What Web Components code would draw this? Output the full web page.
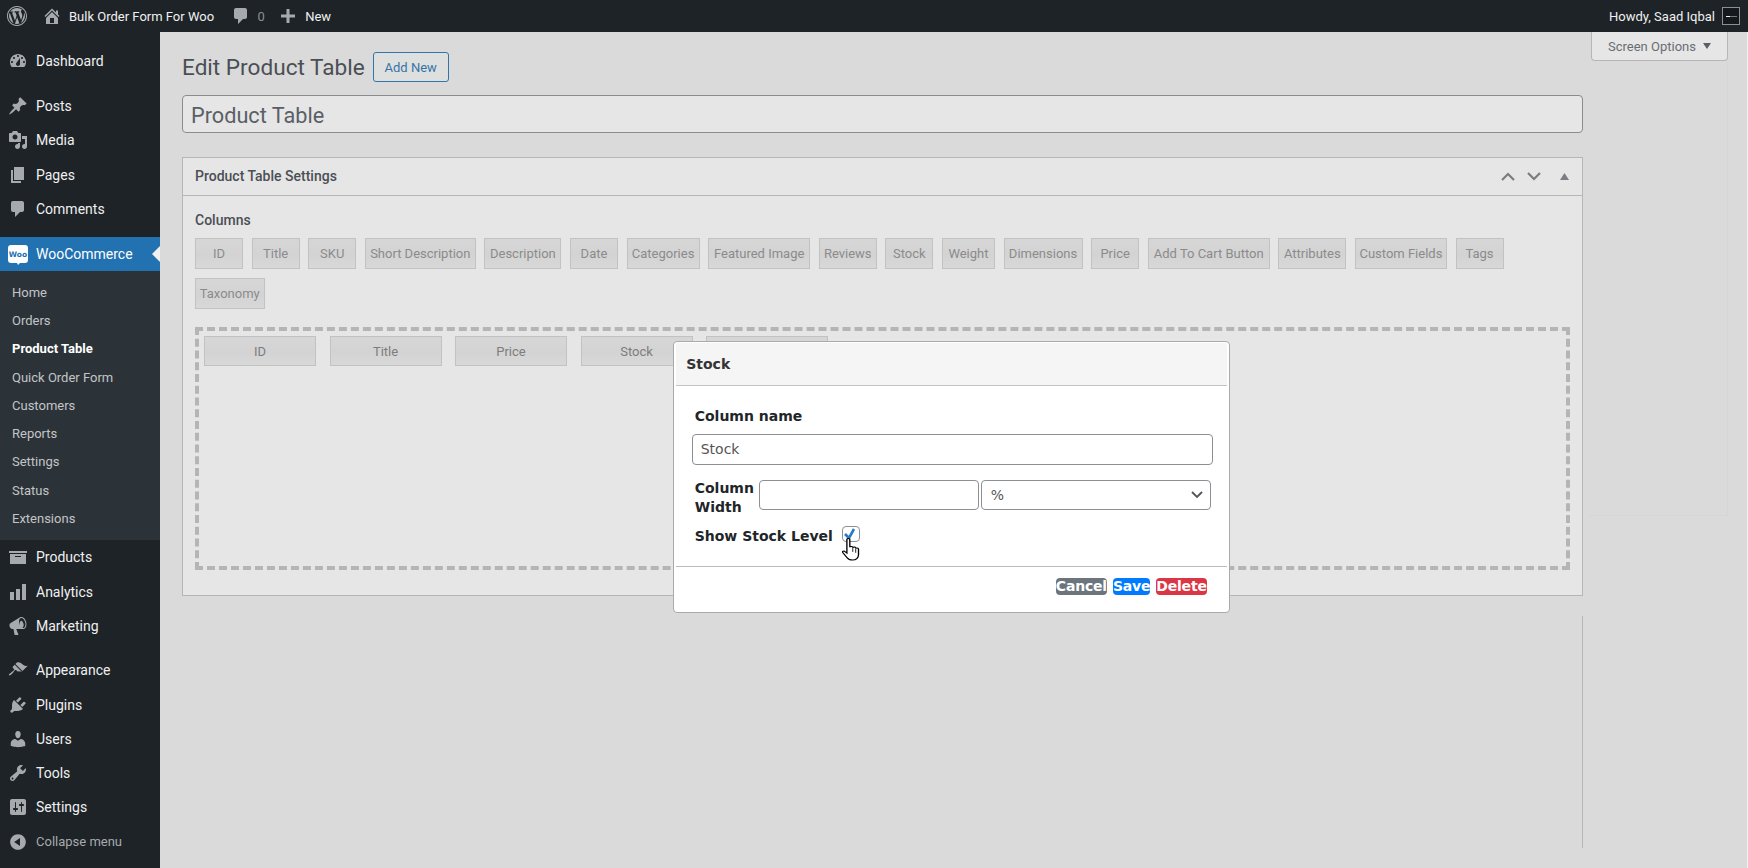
<!DOCTYPE html>
<html lang="en">
<head>
<meta charset="utf-8">
<title>Edit Product Table</title>
<style>
  html, body { margin: 0; height: 868px; overflow: hidden; background: #f0f0f1; }
  body { font-family: Roboto, "Liberation Sans", sans-serif; font-size: 13px; color: #1d2327; }
</style>
</head>
<body>
<wp-app>
  <wp-admin-bar slot="bar"></wp-admin-bar>
  <wp-side-menu slot="menu">
    <wp-menu-item icon="dashboard">Dashboard</wp-menu-item>
    <wp-menu-item icon="post" sep="10.7">Posts</wp-menu-item>
    <wp-menu-item icon="media">Media</wp-menu-item>
    <wp-menu-item icon="page">Pages</wp-menu-item>
    <wp-menu-item icon="comment">Comments</wp-menu-item>
    <wp-menu-item icon="woo" sep="11" current>WooCommerce</wp-menu-item>
    <wp-sub-menu>
      <wp-sub-item>Home</wp-sub-item>
      <wp-sub-item>Orders</wp-sub-item>
      <wp-sub-item current>Product Table</wp-sub-item>
      <wp-sub-item>Quick Order Form</wp-sub-item>
      <wp-sub-item>Customers</wp-sub-item>
      <wp-sub-item>Reports</wp-sub-item>
      <wp-sub-item>Settings</wp-sub-item>
      <wp-sub-item>Status</wp-sub-item>
      <wp-sub-item>Extensions</wp-sub-item>
    </wp-sub-menu>
    <wp-menu-item icon="archive">Products</wp-menu-item>
    <wp-menu-item icon="chart">Analytics</wp-menu-item>
    <wp-menu-item icon="megaphone">Marketing</wp-menu-item>
    <wp-menu-item icon="appearance" sep="10">Appearance</wp-menu-item>
    <wp-menu-item icon="plugin">Plugins</wp-menu-item>
    <wp-menu-item icon="users">Users</wp-menu-item>
    <wp-menu-item icon="tools">Tools</wp-menu-item>
    <wp-menu-item icon="settings">Settings</wp-menu-item>
    <wp-menu-item icon="collapse" dim>Collapse menu</wp-menu-item>
  </wp-side-menu>
  <table-editor slot="main">
    <meta-box heading="Product Table Settings">
      <column-picker>
        <col-chip style="--w:48px">ID</col-chip>
        <col-chip style="--w:48px">Title</col-chip>
        <col-chip style="--w:48px">SKU</col-chip>
        <col-chip style="--w:111px">Short Description</col-chip>
        <col-chip style="--w:77px">Description</col-chip>
        <col-chip style="--w:48px">Date</col-chip>
        <col-chip style="--w:73px">Categories</col-chip>
        <col-chip style="--w:102px">Featured Image</col-chip>
        <col-chip style="--w:58px">Reviews</col-chip>
        <col-chip style="--w:48px">Stock</col-chip>
        <col-chip style="--w:53px">Weight</col-chip>
        <col-chip style="--w:79px">Dimensions</col-chip>
        <col-chip style="--w:48px">Price</col-chip>
        <col-chip style="--w:122px">Add To Cart Button</col-chip>
        <col-chip style="--w:68px">Attributes</col-chip>
        <col-chip style="--w:92px">Custom Fields</col-chip>
        <col-chip style="--w:48px">Tags</col-chip>
        <col-chip style="--w:69.5px">Taxonomy</col-chip>
      </column-picker>
      <drop-zone>
        <col-chip picked style="--w:112px">ID</col-chip>
        <col-chip picked style="--w:112px">Title</col-chip>
        <col-chip picked style="--w:112px">Price</col-chip>
        <col-chip picked style="--w:112px">Stock</col-chip>
        <col-chip picked style="--w:122px"></col-chip>
      </drop-zone>
    </meta-box>
  </table-editor>
  <column-modal slot="main" heading="Stock"></column-modal>
</wp-app>

<script>
const ICONS = {
  wp: 'M20 10c0-5.52-4.48-10-10-10S0 4.48 0 10s4.48 10 10 10 10-4.48 10-10zM10 1.01c4.96 0 8.99 4.03 8.99 8.99s-4.03 8.99-8.99 8.99S1.01 14.96 1.01 10 5.04 1.01 10 1.01zM8.01 14.82L4.96 6.61c.49-.03 1.05-.08 1.05-.08.43-.05.38-1.01-.06-.99 0 0-1.29.1-2.13.1-.15 0-.33 0-.52-.01 1.44-2.17 3.9-3.6 6.7-3.6 2.09 0 3.99.79 5.41 2.09-.6-.08-1.45.35-1.45 1.42 0 .66.38 1.22.79 1.88.31.54.5 1.22.5 2.21 0 1.34-1.27 4.48-1.27 4.48l-2.71-7.5c.48-.03.75-.16.75-.16.43-.05.38-1.1-.05-1.08 0 0-1.3.11-2.14.11-.78 0-2.11-.11-2.11-.11-.43-.02-.48 1.06-.05 1.08l.84.08 1.12 3.04zm6.02 2.15L16.64 10s.67-1.69.39-3.81c.63 1.14.94 2.42.94 3.81 0 2.96-1.56 5.58-3.94 7.01zM2.68 6.77L6.5 17.25c-2.67-1.3-4.47-4.08-4.47-7.25 0-1.16.2-2.23.65-3.23zm7.45 4.53l2.29 6.25c-.75.27-1.57.42-2.42.42-.72 0-1.41-.11-2.06-.3z',
  home: 'M16 8.5l1.53 1.53-1.06 1.06L10 4.62l-6.47 6.47-1.06-1.06L10 2.5l4 4v-2h2v4zm-6-2.46l6 5.99V18H4v-5.97zM12 17v-5H8v5h4z',
  plus: 'M8.5 3h3v5.5H17v3h-5.5V17h-3v-5.5H3v-3h5.5z',
  dashboard: 'M3.76 16h12.48c1.1-1.37 1.76-3.11 1.76-5 0-4.42-3.58-8-8-8s-8 3.58-8 8c0 1.89.66 3.63 1.76 5zM10 4c.55 0 1 .45 1 1s-.45 1-1 1-1-.45-1-1 .45-1 1-1zM6 6c.55 0 1 .45 1 1s-.45 1-1 1-1-.45-1-1 .45-1 1-1zm8 0c.55 0 1 .45 1 1s-.45 1-1 1-1-.45-1-1 .45-1 1-1zm-5.37 5.55L12 7v6c0 1.1-.9 2-2 2s-2-.9-2-2c0-.57.24-1.08.63-1.45zM4 10c.55 0 1 .45 1 1s-.45 1-1 1-1-.45-1-1 .45-1 1-1zm12 0c.55 0 1 .45 1 1s-.45 1-1 1-1-.45-1-1 .45-1 1-1z',
  post: 'M10.44 3.02l1.82-1.82 6.36 6.35-1.83 1.82c-1.05-.68-2.48-.57-3.41.36l-.75.75c-.92.93-1.04 2.35-.35 3.41l-1.83 1.82-2.41-2.41-2.8 2.79c-.42.42-3.38 2.71-3.8 2.29s1.86-3.39 2.28-3.81l2.79-2.79L4.1 9.36l1.83-1.82c1.05.69 2.48.57 3.4-.36l.75-.75c.93-.92 1.05-2.35.36-3.41z',
  media: 'M13 11V4c0-.55-.45-1-1-1h-1.67L9 1H5L3.67 3H2c-.55 0-1 .45-1 1v7c0 .55.45 1 1 1h10c.55 0 1-.45 1-1zM7 4.5c1.38 0 2.5 1.12 2.5 2.5S8.38 9.5 7 9.5 4.5 8.38 4.5 7 5.62 4.5 7 4.5zM14 6h5v10.5c0 1.38-1.12 2.5-2.5 2.5S14 17.88 14 16.5s1.12-2.5 2.5-2.5c.17 0 .34.02.5.05V9h-3V6zm-4 8.05V13h2v3.5c0 1.38-1.12 2.5-2.5 2.5S7 17.88 7 16.5 8.12 14 9.5 14c.17 0 .34.02.5.05z',
  page: 'M6 15V2h10v13H6zm-1 1h8v2H3V5h2v11z',
  comment: 'M5 2h9c1.1 0 2 .9 2 2v7c0 1.1-.9 2-2 2h-2l-5 5v-5H5c-1.1 0-2-.9-2-2V4c0-1.1.9-2 2-2z',
  archive: 'M19 4v2H1V4h18zM2 7h16v10H2V7zm11 3V9H7v1h6z',
  chart: 'M18 18V2h-4v16h4zm-6 0V7H8v11h4zm-6 0v-8H2v8h4z',
  megaphone: 'M18.15 5.94c.46 1.62.38 3.22-.02 4.48-.42 1.28-1.26 2.18-2.3 2.48-.16.06-.26.06-.4.06-.06.02-.12.02-.18.02-.06.02-.14.02-.22.02h-6.8l2.22 5.5c.02.14-.06.26-.14.34-.08.1-.24.16-.34.16H6.95c-.1 0-.26-.06-.34-.16-.08-.08-.16-.2-.14-.34l-1-5.5H4.25l-.02-.02c-.5.06-1.08-.18-1.54-.62s-.88-1.08-1.06-1.88c-.24-.8-.2-1.56-.02-2.2.18-.62.58-1.08 1.06-1.3l.02-.02 9-5.4c.1-.06.18-.1.24-.16.06-.04.14-.08.24-.12.16-.08.28-.12.5-.18 1.04-.3 2.24.1 3.22.98s1.84 2.24 2.26 3.86zm-2.58 5.98h-.02c.4-.1.74-.34 1.04-.7.58-.7.86-1.76.86-3.04 0-.64-.1-1.3-.28-1.98-.34-1.36-1.02-2.5-1.78-3.24s-1.68-1.1-2.46-.88c-.82.22-1.4.96-1.7 2-.32 1.04-.28 2.36.06 3.72.38 1.36 1 2.5 1.8 3.24.78.74 1.62 1.1 2.48.88zm-2.54-7.08c.22-.04.42-.02.62.04.38.16.76.48 1.1 1s.58 1.2.78 1.9c.16.72.2 1.4.12 2.02-.1.6-.34 1.14-.7 1.48-.18.16-.38.3-.62.36-.22.04-.42.02-.62-.04-.4-.16-.76-.48-1.1-1-.34-.54-.58-1.2-.78-1.9-.16-.72-.2-1.4-.12-2.02.1-.6.34-1.14.7-1.48.18-.16.38-.3.62-.36z',
  appearance: 'M14.48 11.06L7.41 3.99l1.5-1.5c.5-.56 2.3-.47 3.51.32 1.21.8 1.43 1.28 2.91 2.1 1.18.64 2.45 1.26 4.45.85zm-.71.71L6.7 4.7 4.93 6.47c-.39.39-.39 1.02 0 1.41l1.06 1.06c.39.39.39 1.03 0 1.42-.6.6-1.43 1.11-2.21 1.69-.35.26-.7.53-1.01.84C1.43 13.23.4 14.85.9 15.35l.01.01c.5.5 2.12-.53 3.46-1.87.31-.31.58-.66.84-1.01.58-.78 1.09-1.61 1.69-2.21.39-.39 1.02-.39 1.41 0l1.06 1.06c.39.39 1.02.39 1.41 0z',
  plugin: 'M13.11 4.36L9.87 7.6 8 5.73l3.24-3.24c.35-.34 1.05-.2 1.56.32.52.51.66 1.21.31 1.55zm-8 1.77l.91-1.12 9.01 9.01-1.19.84c-.71.71-2.63 1.16-3.82 1.16H6.14L4.9 17.26c-.59.59-1.54.59-2.12 0-.59-.58-.59-1.53 0-2.12l1.24-1.24v-3.88c0-1.13.4-3.19 1.09-3.89zm7.26 3.97l3.24-3.24c.34-.35 1.04-.21 1.55.31.52.51.66 1.21.31 1.55l-3.24 3.25z',
  users: 'M10 9.25c-2.27 0-2.73-3.44-2.73-3.44C7 4.02 7.82 2 9.97 2c2.16 0 2.98 2.02 2.71 3.81 0 0-.41 3.44-2.68 3.44zm0 2.57L12.72 10c2.39 0 4.52 2.33 4.52 4.53v2.49s-3.65 1.13-7.24 1.13c-3.65 0-7.24-1.13-7.24-1.13v-2.49c0-2.25 1.94-4.48 4.47-4.48z',
  tools: 'M16.68 9.77c-1.34 1.34-3.3 1.67-4.95.99l-5.41 6.52c-.99.99-2.59.99-3.58 0s-.99-2.59 0-3.57l6.52-5.42c-.68-1.65-.35-3.61.99-4.95 1.28-1.28 3.12-1.62 4.72-1.06l-2.89 2.89 2.82 2.82 2.86-2.87c.53 1.58.18 3.39-1.08 4.65zM3.81 16.21c.4.39 1.04.39 1.43 0 .4-.4.4-1.04 0-1.43-.39-.4-1.03-.4-1.43 0-.39.39-.39 1.03 0 1.43z',
  settings: 'M18 16V4c0-1.1-.9-2-2-2H4c-1.1 0-2 .9-2 2v12c0 1.1.9 2 2 2h12c1.1 0 2-.9 2-2zM8 11h1c.55 0 1 .45 1 1s-.45 1-1 1H8v1.5c0 .28-.22.5-.5.5s-.5-.22-.5-.5V13H6c-.55 0-1-.45-1-1s.45-1 1-1h1V5.5c0-.28.22-.5.5-.5s.5.22.5.5V11zm5-2h-1c-.55 0-1-.45-1-1s.45-1 1-1h1V5.5c0-.28.22-.5.5-.5s.5.22.5.5V7h1c.55 0 1 .45 1 1s-.45 1-1 1h-1v5.5c0 .28-.22.5-.5.5s-.5-.22-.5-.5V9z',
  collapse: 'M10 2.16c4.33 0 7.84 3.51 7.84 7.84s-3.51 7.84-7.84 7.84S2.16 14.33 2.16 10 5.71 2.16 10 2.16zm2 11.72V6.12L6.18 9.97z'
};

// small helper, every element below is the same shape
function shadow(el, html) {
  el.attachShadow({ mode: 'open' }).innerHTML = html;
}

class WpIcon extends HTMLElement {
  connectedCallback() {
    const size = this.getAttribute('size') || 20;
    shadow(this, `
      <style>:host { display: inline-flex; flex: none; } svg { display: block; fill: currentColor; }</style>
      <svg width="${size}" height="${size}" viewBox="0 0 20 20"><path d="${ICONS[this.getAttribute('name')]}"></path></svg>`);
  }
}

class WpApp extends HTMLElement {
  constructor() {
    super();
    shadow(this, `
      <style>
        :host { display: grid; grid-template: 32px 836px / 160px 1fr; width: 1748px; height: 868px; position: relative; }
        .bar { grid-column: 1 / 3; }
        .main { position: relative; overflow: hidden; }
        /* the dim layer the modal opens over */
        .dim { position: absolute; inset: 0 1px 0 0; background: rgba(128,128,128,.2); }
      </style>
      <div class="bar"><slot name="bar"></slot></div>
      <div><slot name="menu"></slot></div>
      <div class="main"><slot name="main"></slot><div class="dim"></div><slot name="modal"></slot></div>`);
  }
  connectedCallback() {
    const modal = this.querySelector('column-modal');
    if (modal) modal.slot = 'modal';
  }
}

class WpAdminBar extends HTMLElement {
  constructor() {
    super();
    shadow(this, `
      <style>
        :host { display: flex; align-items: center; height: 32px; background: #1d2327; color: #f0f0f1; font-size: 13px; padding: 0 8px 0 7px; box-sizing: border-box; }
        wp-icon { color: #a7aaad; }
        .site { margin-left: 15px; color: #a7aaad; }
        .name { margin-left: 7px; width: 147px; white-space: nowrap; }
        .bubble { margin-left: 15px; color: #a7aaad; }
        .count { margin-left: 6.5px; color: #8c8f94; width: 20.7px; }
        .new { margin-left: 7px; }
        .howdy { margin-left: auto; }
        .avatar { width: 18px; height: 18px; box-sizing: border-box; margin-left: 7px; border: 1px solid #8c8f94; background: #16191c; display: flex; align-items: center; justify-content: center; }
        .avatar i { display: block; width: 11px; height: 1px; background: linear-gradient(90deg, #eee 40%, #777 40%); }
      </style>
      <wp-icon name="wp" size="20"></wp-icon>
      <wp-icon class="site" name="home" size="20"></wp-icon>
      <span class="name">Bulk Order Form For Woo</span>
      <wp-icon class="bubble" name="comment" size="20"></wp-icon>
      <span class="count">0</span>
      <wp-icon class="plus" name="plus" size="20"></wp-icon>
      <span class="new">New</span>
      <span class="howdy">Howdy, Saad Iqbal</span>
      <span class="avatar"><i></i></span>`);
  }
}

class WpSideMenu extends HTMLElement {
  constructor() {
    super();
    shadow(this, `
      <style>:host { display: block; height: 836px; background: #1d2327; padding-top: 12px; box-sizing: border-box; }</style>
      <slot></slot>`);
  }
}

class WpMenuItem extends HTMLElement {
  connectedCallback() {
    const icon = this.getAttribute('icon');
    const sep = this.getAttribute('sep');
    const mark = icon === 'woo'
      ? `<svg width="20" height="21" viewBox="0 0 20 21"><path fill="#fff" d="M3 0h14a3 3 0 0 1 3 3v12a3 3 0 0 1-3 3h-5l-2 2-1-2H3a3 3 0 0 1-3-3V3a3 3 0 0 1 3-3z"></path><text x="10" y="12" text-anchor="middle" font-family="'DejaVu Sans'" font-weight="700" font-size="7.5" fill="#2271b1">Woo</text></svg>`
      : `<wp-icon name="${icon}"></wp-icon>`;
    shadow(this, `
      <style>
        :host { display: flex; align-items: center; gap: 8px; height: 34.3px; padding-left: 8px; font-size: 14px; color: #f0f0f1; position: relative; white-space: nowrap; ${sep ? `margin-top:${sep}px;` : ''} }
        :host([current]) { background: #2271b1; color: #fff; height: 34px; }
        :host([dim]) { font-size: 13px; color: #a7aaad; }
        wp-icon { color: #a7aaad; }
        :host([current]) svg { margin-top: 2px; }
        /* little arrow pointing at the open page */
        :host([current])::after { content: ""; position: absolute; right: 0; top: 9px; border: 8px solid transparent; border-left: 0; border-right-color: #f0f0f1; }
      </style>
      ${mark}<slot></slot>`);
  }
}

class WpSubMenu extends HTMLElement {
  constructor() {
    super();
    shadow(this, `
      <style>:host { display: block; height: 269px; box-sizing: border-box; background: #2c3338; padding-top: 7px; }</style>
      <slot></slot>`);
  }
}

class WpSubItem extends HTMLElement {
  constructor() {
    super();
    shadow(this, `
      <style>
        :host { display: flex; align-items: center; height: 28.25px; padding-left: 12px; font-size: 13px; color: #c3c4c7; white-space: nowrap; }
        :host([current]) { color: #fff; font-weight: 700; }
      </style>
      <slot></slot>`);
  }
}

class TableEditor extends HTMLElement {
  constructor() {
    super();
    shadow(this, `
      <style>
        :host { display: flex; height: 836px; padding-left: 22px; box-sizing: border-box; }
        .primary { width: 1401px; flex: none; padding-top: 20px; box-sizing: border-box; }
        .head { display: flex; align-items: center; gap: 8px; height: 30px; }
        h1 { margin: 0; padding-top: 2px; font-size: 22.6px; font-weight: 400; line-height: 28px; color: #3c434a; }
        .add { width: 76px; height: 30px; box-sizing: border-box; border: 1px solid #2271b1; border-radius: 3px; background: #f6f7f7; color: #2271b1; font-size: 13px; display: flex; align-items: center; justify-content: center; }
        .title { display: block; width: 100%; height: 38px; box-sizing: border-box; margin: 13px 0 24px; padding: 2px 8px 0; border: 1px solid #8c8f94; border-radius: 4px; background: #fff; font: 21.7px Roboto, sans-serif; color: #50575e; }
        .rule { margin-top: 20px; height: 232px; border-right: 1px solid #c3c4c7; }
        .side { width: 145px; flex: none; display: flex; flex-direction: column; align-items: flex-end; }
        .tab { width: 137px; height: 29px; box-sizing: border-box; display: flex; align-items: center; justify-content: center; gap: 7px; border: 1px solid #c3c4c7; border-top: 0; border-radius: 0 0 4px 4px; background: #fff; font-size: 13px; color: #646970; }
        .tab i { border: 4.5px solid transparent; border-top: 6px solid #50575e; border-bottom: 0; }
        .faint { width: 139px; height: 455px; box-sizing: border-box; border: solid #ececec; border-width: 0 1px 1px 0; }
      </style>
      <div class="primary">
        <div class="head"><h1>Edit Product Table</h1><span class="add">Add New</span></div>
        <input class="title" value="Product Table">
        <slot></slot>
        <div class="rule"></div>
      </div>
      <div class="side">
        <div class="tab">Screen Options <i></i></div>
        <div class="faint"></div>
      </div>`);
  }
}

class MetaBox extends HTMLElement {
  connectedCallback() {
    shadow(this, `
      <style>
        :host { display: block; height: 439px; box-sizing: border-box; border: 1px solid #c3c4c7; background: #fff; }
        header { display: flex; align-items: center; height: 38px; padding: 0 12px 1px; box-sizing: border-box; border-bottom: 1px solid #c3c4c7; font-size: 14px; font-weight: 500; color: #3c434a; }
        h2 { margin: 0; font: inherit; flex: 1; }
        svg { display: block; margin-left: 12px; fill: none; stroke: #787c82; stroke-width: 2.2; }
        .tri { margin-left: 19.5px; margin-right: 1px; fill: #787c82; stroke: none; }
        .body { padding: 13.5px 12px 0; }
        .label { font-size: 14px; font-weight: 500; line-height: 20px; margin-bottom: 8.5px; color: #3c434a; }
      </style>
      <header>
        <h2>${this.getAttribute('heading')}</h2>
        <svg width="14" height="9" viewBox="0 0 14 9"><path d="M1 8l6-6 6 6"></path></svg>
        <svg width="14" height="9" viewBox="0 0 14 9"><path d="M1 1l6 6 6-6"></path></svg>
        <svg class="tri" width="9" height="7" viewBox="0 0 9 7"><path d="M4.5 0L9 7H0z"></path></svg>
      </header>
      <div class="body"><div class="label">Columns</div><slot></slot></div>`);
  }
}

class ColumnPicker extends HTMLElement {
  constructor() {
    super();
    shadow(this, `
      <style>:host { display: flex; flex-wrap: wrap; gap: 9.5px 8.6px; }</style>
      <slot></slot>`);
  }
}

class DropZone extends HTMLElement {
  constructor() {
    super();
    shadow(this, `
      <style>
        :host { display: flex; align-items: flex-start; gap: 13.5px; height: 243px; box-sizing: border-box; margin-top: 18.5px; padding: 5px; border: 4px dashed #c2c2c2; }
      </style>
      <slot></slot>`);
  }
}

class ColChip extends HTMLElement {
  constructor() {
    super();
    shadow(this, `
      <style>
        :host { display: flex; align-items: center; justify-content: center; width: var(--w, 48px); height: 30.5px; box-sizing: border-box; border: 1px solid #d2d2d2; background: linear-gradient(#ececec, #e8e8e8 55%, #eeeeee); font-size: 13px; color: #8e8e8e; white-space: nowrap; }
        :host([picked]) { height: 30px; color: #7c7c7c; }
      </style>
      <slot></slot>`);
  }
}

class ColumnModal extends HTMLElement {
  connectedCallback() {
    shadow(this, `
      <style>
        :host { position: absolute; left: 513px; top: 309px; width: 556.7px; height: 272px; box-sizing: border-box; padding: 1px 2px; background: #fff; border: 1px solid #aaa; border-radius: 4px; font-family: "DejaVu Sans", Verdana, sans-serif; font-size: 14px; color: #212529; }
        header { height: 42px; line-height: 42px; padding-left: 10.2px; background: #f5f5f5; border-bottom: 1px solid #c4c4c4; font-weight: 700; color: #333; }
        .body { height: 180px; box-sizing: border-box; padding: 21px 14px 0 15.7px; }
        label, .lbl { display: block; font-weight: 700; line-height: 19px; margin-left: 3px; }
        input, select { font: 14px "DejaVu Sans", Verdana, sans-serif; color: #555; box-sizing: border-box; border: 1px solid #8c8f94; border-radius: 4px; background: #fff; margin: 0; outline: 0; }
        .name { display: block; width: 521px; height: 31px; margin-top: 7.5px; padding: 0 8px; }
        .row { display: flex; align-items: flex-start; margin-top: 14.5px; }
        .row .lbl { width: 64px; flex: none; }
        .row input { width: 220px; height: 30px; margin-top: .5px; }
        .pick { position: relative; margin: .5px 0 0 2px; }
        select { display: block; width: 230px; height: 30px; padding: 0 9px; appearance: none; -webkit-appearance: none; }
        .chev { position: absolute; right: 8px; top: 11px; fill: none; stroke: #555; stroke-width: 1.8; pointer-events: none; }
        .show { display: flex; align-items: flex-start; margin-top: 10px; position: relative; }
        .show .lbl { margin-right: 9px; }
        .box { width: 18px; height: 16px; box-sizing: border-box; border: 1px solid #8c8f94; border-radius: 4px; margin-top: -1.5px; position: relative; }
        .box svg { position: absolute; left: 0; top: 0; fill: none; stroke: #2a7bc5; stroke-width: 2.6; }
        .hand { position: absolute; left: 150px; top: 10.5px; }
        footer { display: flex; justify-content: flex-end; gap: 6px; padding: 11px 20px 0 0; border-top: 1px solid #bbb; }
        .btn { height: 17px; line-height: 17px; border-radius: 4px; color: #fff; font-weight: 700; letter-spacing: -.2px; }
        .grey { background: #6c757d; } .blue { background: #007bff; } .red { background: #dc3545; }
      </style>
      <header>${this.getAttribute('heading')}</header>
      <div class="body">
        <label>Column name</label>
        <input class="name" value="Stock">
        <div class="row">
          <span class="lbl">Column Width</span>
          <input>
          <div class="pick">
            <select><option>%</option></select>
            <svg class="chev" width="12" height="8" viewBox="0 0 12 8"><path d="M1 1l5 5 5-5"></path></svg>
          </div>
        </div>
        <div class="show">
          <span class="lbl">Show Stock Level</span>
          <span class="box"><svg width="15" height="14" viewBox="0 0 15 14"><path d="M2 7l4 4 5-9"></path></svg></span>
          <svg class="hand" width="22" height="24" viewBox="0 0 18 26" preserveAspectRatio="none"><path fill="#fff" stroke="#000" stroke-width="1.1" d="M4 1.5c0-1.3 2.4-1.3 2.4 0V10c.3-1.2 2.3-1.2 2.4 0v.6c.3-1.1 2.2-1.1 2.4.2v.7c.4-1 2.2-.9 2.3.4v6.5c0 3-2 5.5-4.8 5.5-2.4 0-3.7-1-4.7-2.8L.6 15.8c-.7-1.2.9-2.3 1.9-1.1L4 16.3Z"></path><path fill="none" stroke="#000" stroke-width=".8" d="M8.8 11v4M11.2 12v4"></path></svg>
        </div>
      </div>
      <footer>
        <span class="btn grey">Cancel</span>
        <span class="btn blue">Save</span>
        <span class="btn red">Delete</span>
      </footer>`);
  }
}

customElements.define('wp-icon', WpIcon);
customElements.define('wp-app', WpApp);
customElements.define('wp-admin-bar', WpAdminBar);
customElements.define('wp-side-menu', WpSideMenu);
customElements.define('wp-menu-item', WpMenuItem);
customElements.define('wp-sub-menu', WpSubMenu);
customElements.define('wp-sub-item', WpSubItem);
customElements.define('table-editor', TableEditor);
customElements.define('meta-box', MetaBox);
customElements.define('column-picker', ColumnPicker);
customElements.define('drop-zone', DropZone);
customElements.define('col-chip', ColChip);
customElements.define('column-modal', ColumnModal);
</script>
</body>
</html>
